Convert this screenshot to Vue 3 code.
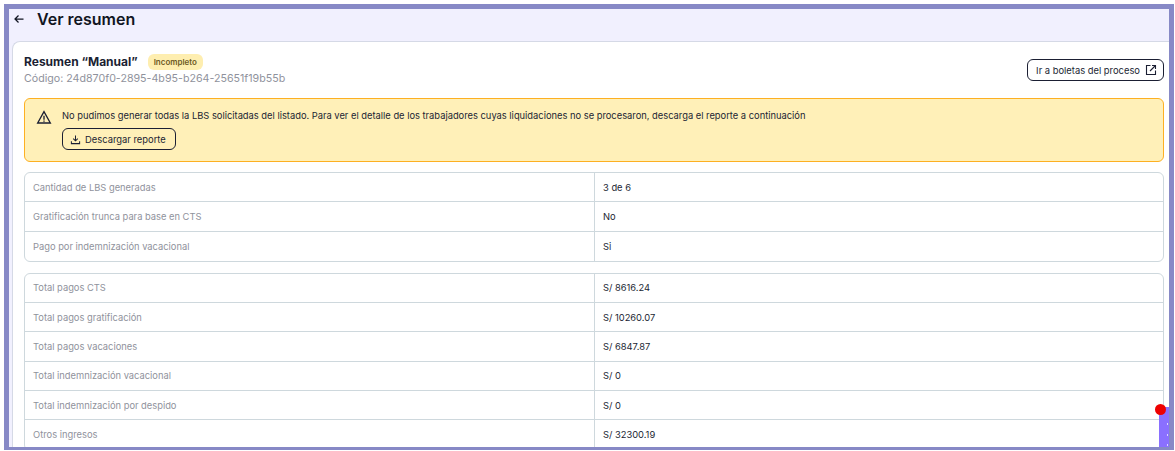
<script setup>
const first = [
  ['Cantidad de LBS generadas', '3 de 6'],
  ['Gratificación trunca para base en CTS', 'No'],
  ['Pago por indemnización vacacional', 'Si'],
]
const second = [
  ['Total pagos CTS', 'S/ 8616.24'],
  ['Total pagos gratificación', 'S/ 10260.07'],
  ['Total pagos vacaciones', 'S/ 6847.87'],
  ['Total indemnización vacacional', 'S/ 0'],
  ['Total indemnización por despido', 'S/ 0'],
  ['Otros ingresos', 'S/ 32300.19'],
]
</script>

<template>
  <div class="shot">
    <div class="frame">
      <header class="top">
        <svg class="back" viewBox="0 0 24 24" width="12" height="12" fill="none" stroke="#111522" stroke-width="2.5">
          <path d="M21 12H4M11 5l-7 7 7 7" />
        </svg>
        <h1>Ver resumen</h1>
      </header>
      <main class="card">
        <div class="head">
          <div>
            <div class="title-row">
              <h2>Resumen “Manual”</h2>
              <span class="badge">Incompleto</span>
            </div>
            <div class="code">Código: 24d870f0-2895-4b95-b264-25651f19b55b</div>
          </div>
          <button class="btn link-btn">
            Ir a boletas del proceso
            <svg viewBox="0 0 24 24" width="12" height="12" fill="none" stroke="#1b1f33" stroke-width="2.2">
              <path d="M11 3H3v18h18v-8M14 3h7v7M21 3L10 14" />
            </svg>
          </button>
        </div>
        <section class="alert">
          <svg class="warn" viewBox="0 0 24 24" width="16" height="16" fill="none" stroke="#1b1f33" stroke-width="2">
            <path d="M12 4L2.5 21h19L12 4z" />
            <path d="M12 10v6M12 17.2v2" />
          </svg>
          <div class="alert-body">
            <p>No pudimos generar todas la LBS solicitadas del listado. Para ver el detalle de los trabajadores cuyas liquidaciones no se procesaron, descarga el reporte a continuación</p>
            <button class="btn dl-btn">
              <svg viewBox="0 0 24 24" width="11" height="11" fill="none" stroke="#1b1f33" stroke-width="2.2">
                <path d="M12 3v12M7 10l5 5 5-5M3 16v5h18v-5" />
              </svg>
              Descargar reporte
            </button>
          </div>
        </section>
        <div class="table">
          <div v-for="row in first" :key="row[0]" class="row">
            <div class="label">{{ row[0] }}</div>
            <div class="value">{{ row[1] }}</div>
          </div>
        </div>
        <div class="table second">
          <div v-for="row in second" :key="row[0]" class="row">
            <div class="label">{{ row[0] }}</div>
            <div class="value">{{ row[1] }}</div>
          </div>
        </div>
      </main>
      <div class="scroll-tab">
        <span class="dot"></span>
        <span class="speck s1"></span>
        <span class="speck s2"></span>
        <span class="speck s3"></span>
      </div>
    </div>
  </div>
</template>

<style>
html, body { margin: 0; background: #fff; overflow: hidden; }
</style>

<style scoped>
.shot {
  width: 1175px;
  height: 451px;
  box-sizing: border-box;
  padding: 4px 1px 1px 4px;
  font-family: Inter, "Liberation Sans", sans-serif;
  color: #1b1f33;
  overflow: hidden;
}
.frame {
  position: relative;
  box-sizing: border-box;
  height: 100%;
  border: 5px solid #8789c6;
  border-bottom-width: 3px;
  background: #f1f0fe;
  overflow: hidden;
}
.top {
  display: flex;
  align-items: center;
  gap: 12px;
  height: 12px;
  padding: 4px 0 16px 4px;
}
.top h1 {
  margin: 0;
  font-size: 16px;
  line-height: 12px;
  font-weight: 600;
  color: #111522;
}
.back { flex: none; }
.card {
  margin-left: 3px;
  background: #fff;
  border: 1px solid #d5d9e6;
  border-right: 0;
  border-radius: 8px 0 0 0;
  padding: 11px 5px 0 11px;
}
.head {
  display: flex;
  justify-content: space-between;
  align-items: center;
  height: 34px;
}
.title-row { display: flex; align-items: center; gap: 10px; }
.title-row h2 {
  margin: 0;
  font-size: 12px;
  line-height: 16px;
  font-weight: 700;
}
.badge {
  background: #feeeb0;
  color: #6d5a23;
  font-size: 8px;
  font-weight: 600;
  line-height: 16px;
  padding: 0 6px;
  border-radius: 6px;
}
.code {
  margin-top: 2px;
  font-size: 10.67px;
  line-height: 14px;
  color: #8f929c;
}
.btn {
  display: inline-flex;
  align-items: center;
  background: #fff;
  border: 1px solid #1b1f33;
  border-radius: 6px;
  font-family: inherit;
  color: #1b1f33;
  font-size: 9.4px;
  padding: 0;
  box-sizing: border-box;
  height: 22px;
}
.link-btn { padding: 0 6px 0 8px; gap: 5px; }
.alert {
  margin-top: 11px;
  display: flex;
  gap: 10px;
  box-sizing: border-box;
  height: 64px;
  padding: 11px 11px;
  background: #fff0b8;
  border: 1px solid #fdb022;
  border-radius: 6px;
}
.warn { flex: none; margin-top: -1px; }
.alert-body p {
  margin: 0 0 6px;
  font-size: 9.33px;
  line-height: 12px;
}
.dl-btn { background: transparent; padding: 0 9px 0 7px; gap: 4px; }
.table {
  margin-top: 10px;
  border: 1px solid #ced8dd;
  border-radius: 6px;
  background: #fff;
}
.second { margin-top: 10.7px; }
.row {
  display: grid;
  grid-template-columns: 570px 1fr;
  height: 29.33px;
  box-sizing: border-box;
  border-bottom: 1px solid #ced8dd;
  font-size: 9.33px;
}
.table:not(.second) .row:last-child { border-bottom: 0; }
.label, .value {
  display: flex;
  align-items: center;
  padding-left: 8px;
}
.label { color: #8f929c; border-right: 1px solid #ced8dd; }
.value { color: #1b1f33; }
.scroll-tab {
  position: absolute;
  right: 0;
  bottom: 0;
  width: 10px;
  height: 40px;
  background: #8a70ff;
}
.dot {
  position: absolute;
  left: -4px;
  top: -3px;
  width: 11px;
  height: 11px;
  border-radius: 50%;
  background: #ee0000;
}
.speck {
  position: absolute;
  right: 1px;
  width: 1.5px;
  height: 1.5px;
  background: #fff;
  opacity: 0.7;
}
.s1 { top: 16px; }
.s2 { top: 27px; }
.s3 { top: 37px; }
</style>
